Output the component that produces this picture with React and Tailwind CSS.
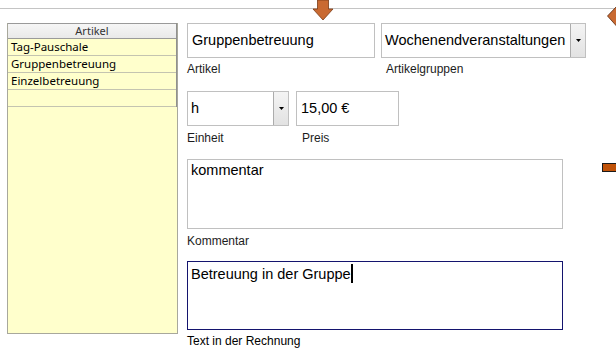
import React from "react";

const rows = ["Tag-Pauschale", "Gruppenbetreuung", "Einzelbetreuung", ""];

const DropButton = () => (
  <div className="w-[15px] h-full flex items-center justify-center border-l border-[#acacac] bg-gradient-to-b from-[#f4f4f4] to-[#e2e2e2]">
    <svg width="5" height="3" viewBox="0 0 5 3">
      <path d="M0 0h5L2.5 3z" fill="#000" />
    </svg>
  </div>
);

const Label = ({ children, className = "" }) => (
  <div className={`text-[12px] leading-[14px] text-[#1c1c1c] ${className}`}>{children}</div>
);

const App = () => {
  return (
    <div className="relative w-[616px] h-[349px] bg-white overflow-hidden font-['Liberation_Sans',Arial,sans-serif]">
      <div className="h-[9px] border-b border-[#c4c4c4]" />

      {/* arrow pointing down */}
      <svg className="absolute left-[312px] top-0" width="22" height="21" viewBox="0 0 22 21">
        <path d="M5.5 0V9H1L11 20L21 9H16.5V0Z" fill="#c96a32" stroke="#7a3b16" strokeWidth="0.8" />
      </svg>

      {/* diamond on right edge */}
      <svg className="absolute right-0 top-[6px]" width="9" height="21" viewBox="0 0 9 21">
        <path d="M0.5 10L9.5 0.5V20Z" fill="#c96a32" stroke="#5a2a10" strokeWidth="0.8" />
      </svg>

      {/* connector square on right */}
      <div className="absolute right-0 top-[163px] w-[14px] h-[9px] bg-[#c05208] border border-[#1a1a1a] border-r-0" />

      <div className="flex pl-[7px] pt-[14px]">
        {/* list panel */}
        <div className="w-[171px] h-[311px] bg-[#ffffcc] border border-t-0 border-[#a8a89c] flex flex-col font-['Noto_Sans',sans-serif]">
          <div className="w-[169px] border-r border-[#909090]">
            <div className="h-[16px] border-t border-b border-[#9a9a9a] bg-gradient-to-b from-[#f6f6f6] to-[#e9e9e9] flex items-center justify-center text-[11px] text-[#333]">
              Artikel
            </div>
            {rows.map((r, i) => (
              <div key={i} className="h-[17px] border-b border-[#c4c4b0] flex items-center pl-[3px] text-[11.5px] text-black leading-none">
                {r}
              </div>
            ))}
          </div>
        </div>

        {/* form */}
        <div className="ml-[9px] flex flex-col">
          <div className="flex gap-[6px]">
            <div className="w-[188px] h-[35px] border border-[#c0c0c0] flex items-center pl-[4px] text-[14.5px] text-black">
              Gruppenbetreuung
            </div>
            <div className="w-[205px] h-[35px] border border-[#c0c0c0] flex items-center text-[14.5px] text-black">
              <div className="flex-1 pl-[3px]">Wochenendveranstaltungen</div>
              <DropButton />
            </div>
          </div>
          <div className="flex mt-[4px]">
            <Label className="w-[199px]">Artikel</Label>
            <Label>Artikelgruppen</Label>
          </div>

          <div className="flex gap-[7px] mt-[15px]">
            <div className="w-[102px] h-[35px] border border-[#c0c0c0] flex items-center text-[14.5px] text-black">
              <div className="flex-1 pl-[3px]">h</div>
              <DropButton />
            </div>
            <div className="w-[103px] h-[35px] border border-[#c0c0c0] flex items-center pl-[4px] text-[14.5px] text-black">
              15,00 €
            </div>
          </div>
          <div className="flex mt-[5px]">
            <Label className="w-[115px]">Einheit</Label>
            <Label>Preis</Label>
          </div>

          <div className="mt-[14px] w-[376px] h-[70px] border border-[#c0c0c0] pl-[3px] pt-[2px] text-[14.5px] leading-[17px] text-black">
            kommentar
          </div>
          <Label className="mt-[5px]">Kommentar</Label>

          <div className="mt-[13px] w-[376px] h-[69px] border border-[#14146e] pl-[3px] pt-[2px] text-[14.5px] leading-[17px] text-black">
            Betreuung in der Gruppe
            <span className="inline-block w-[2px] h-[19px] bg-black align-[-4px]" />
          </div>
          <Label className="mt-[4px] text-black">Text in der Rechnung</Label>
        </div>
      </div>
    </div>
  );
};

export default App;
